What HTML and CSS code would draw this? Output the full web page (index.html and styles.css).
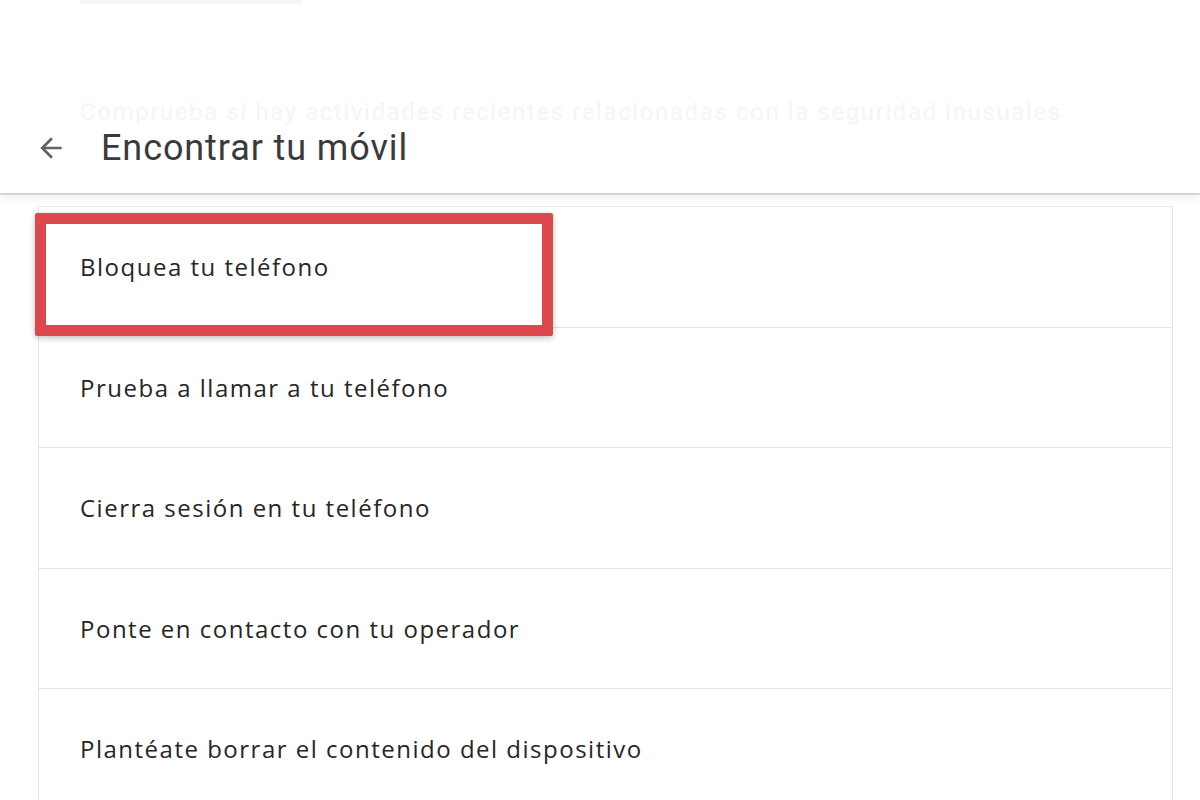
FILE: index.html
```html
<!DOCTYPE html>
<html lang="es">
<head>
    <meta charset="UTF-8">
    <meta name="viewport" content="width=device-width, initial-scale=1.0">
    <title>Encontrar tu móvil</title>
    <link rel="stylesheet" href="styles.css">
</head>
<body>
    <div class="page-top">
        <div class="ghost-rule"></div>
        <div class="ghost-text">Comprueba si hay actividades recientes relacionadas con la seguridad inusuales</div>
        <div class="title-bar">
            <svg class="back" width="32" height="32" viewBox="0 0 24 24">
                <path d="M20 11H7.83l5.59-5.59L12 4l-8 8 8 8 1.41-1.41L7.83 13H20v-2z" fill="#5f6368"/>
            </svg>
            <h1>Encontrar tu móvil</h1>
        </div>
    </div>

    <div class="card">
        <div class="row">
            <span>Bloquea tu teléfono</span>
            <div class="highlight"></div>
        </div>
        <div class="row"><span>Prueba a llamar a tu teléfono</span></div>
        <div class="row"><span>Cierra sesión en tu teléfono</span></div>
        <div class="row"><span>Ponte en contacto con tu operador</span></div>
        <div class="row"><span>Plantéate borrar el contenido del dispositivo</span></div>
    </div>
</body>
</html>
```

FILE: styles.css
```css
body {
    margin: 0;
    background: #fff;
    font-family: Roboto, "Liberation Sans", sans-serif;
    color: #333;
    overflow: hidden;
}
.page-top {
    height: 195px;
    box-sizing: border-box;
    border-bottom: 2px solid #d4d4d4;
    box-shadow: 0 3px 10px rgba(0, 0, 0, 0.07);
    position: relative;
    z-index: 1;
    background: #fff;
}
.ghost-rule {
    margin-left: 80px;
    width: 222px;
    height: 4px;
    background: #f6f6f6;
}
.ghost-text {
    margin-top: 95px;
    padding-left: 80px;
    font-size: 24px;
    line-height: 26px;
    letter-spacing: 1.6px;
    color: #f5f5f5;
    white-space: nowrap;
}
.title-bar {
    display: flex;
    align-items: center;
    padding-left: 35px;
    height: 46px;
}
.back {
    margin-right: 34px;
}
h1 {
    margin: 0;
    font-size: 36px;
    font-weight: 400;
    color: #3a3a3a;
    letter-spacing: 0.9px;
}
.card {
    margin: 11px 27px 0 38px;
    border-left: 1px solid #e6e6e6;
    border-right: 1px solid #e6e6e6;
    border-top: 1px solid #ececec;
}
.row {
    position: relative;
    height: 120.5px;
    box-sizing: border-box;
    border-bottom: 1px solid #e3e3e3;
    display: flex;
    align-items: center;
    padding-left: 41px;
    font-family: "Open Sans", Roboto, sans-serif;
    font-size: 24px;
    letter-spacing: 1.5px;
    color: #262626;
}
.highlight {
    position: absolute;
    left: -4px;
    top: 6px;
    width: 518px;
    height: 123px;
    box-sizing: border-box;
    border: 11px solid #dc484d;
    border-radius: 2px;
    box-shadow: 0 2px 6px rgba(0, 0, 0, 0.25);
    z-index: 2;
}
```
